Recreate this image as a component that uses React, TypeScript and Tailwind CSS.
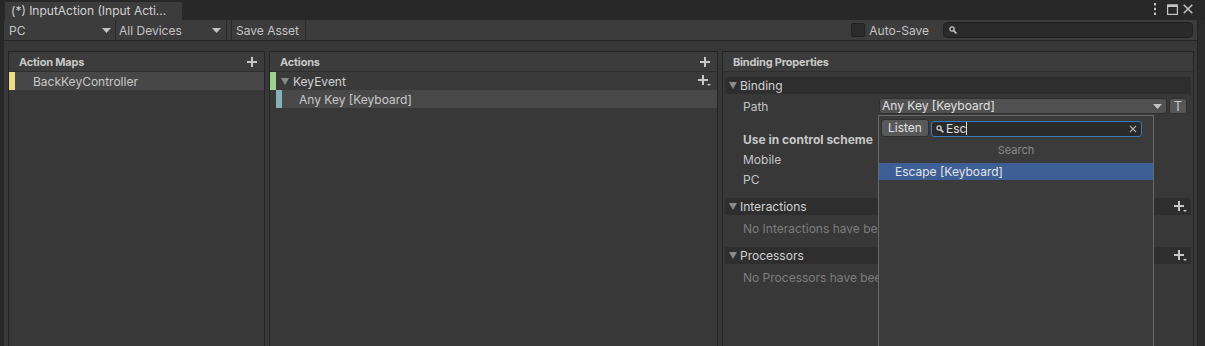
import React from 'react';

const Plus = () => (
  <svg width="10" height="10" viewBox="0 0 10 10">
    <path d="M5 0v10M0 5h10" stroke="#c8c8c8" strokeWidth="2" />
  </svg>
);

const PlusMore = () => (
  <svg width="13" height="12" viewBox="0 0 13 12">
    <path d="M5 0v10M0 5h10" stroke="#c8c8c8" strokeWidth="2" />
    <path d="M9 9h4l-2 2z" fill="#c8c8c8" />
  </svg>
);

const Fold = () => (
  <svg width="8" height="7" viewBox="0 0 8 7">
    <path d="M0 0h8L4 7z" fill="#8a8a8a" />
  </svg>
);

const Arrow = () => (
  <svg width="9" height="5" viewBox="0 0 9 5">
    <path d="M0 0h9L4.5 5z" fill="#c4c4c4" />
  </svg>
);

const Magnifier = ({ color = '#c4c4c4' }: { color?: string }) => (
  <svg width="8" height="8" viewBox="0 0 8 8">
    <circle cx="3" cy="3" r="2.1" stroke={color} strokeWidth="1.3" fill="none" />
    <path d="M4.6 4.6L7.4 7.4" stroke={color} strokeWidth="1.6" />
  </svg>
);

const Row = ({
  children,
  className = '',
}: {
  children: React.ReactNode;
  className?: string;
}) => <div className={`flex items-center ${className}`}>{children}</div>;

const PanelHeader = ({ title, plus = true }: { title: string; plus?: boolean }) => (
  <div className="h-[20px] shrink-0 flex items-center justify-between pl-[10px] pr-[7px] bg-[#3c3c3c] border-b border-[#2e2e2e]">
    <span className="mt-[2px] text-[11px] font-bold text-[#c8c8c8] tracking-[-0.2px]">{title}</span>
    {plus && <Plus />}
  </div>
);

const Foldout = ({ title, plus = false }: { title: string; plus?: boolean }) => (
  <div className="h-[17px] mx-[2px] flex items-center justify-between pl-[4px] pr-[4px] bg-[#2e2e2e]">
    <div className="flex items-center gap-[3px]">
      <Fold />
      <span className="text-[12px] text-[#d2d2d2]">{title}</span>
    </div>
    {plus && <PlusMore />}
  </div>
);

export default function App() {
  return (
    <div className="w-[1205px] h-[346px] bg-[#282828] flex flex-col overflow-hidden font-['Inter','Noto_Sans',sans-serif] select-none">
      {/* tab bar */}
      <div className="h-[20px] shrink-0 flex items-end justify-between pl-[5px] pr-[12px]">
        <div className="w-[177px] h-[18px] bg-[#3c3c3c] rounded-tr-[2px] flex items-center pl-[6px]">
          <span className="text-[12px] text-[#d2d2d2]">(*) InputAction (Input Acti...</span>
        </div>
        <div className="h-[20px] flex items-center pb-[2px]">
          <svg width="4" height="12" viewBox="0 0 4 12">
            <rect x="1" y="0" width="2" height="2.4" fill="#c4c4c4" />
            <rect x="1" y="4.8" width="2" height="2.4" fill="#c4c4c4" />
            <rect x="1" y="9.6" width="2" height="2.4" fill="#c4c4c4" />
          </svg>
          <svg width="11" height="11" viewBox="0 0 11 11" className="ml-[10px]">
            <rect x="0.6" y="1" width="9.8" height="9.4" stroke="#c4c4c4" strokeWidth="1.2" fill="none" />
            <rect x="0.6" y="0.6" width="9.8" height="2.4" fill="#c4c4c4" />
          </svg>
          <svg width="10" height="10" viewBox="0 0 10 10" className="ml-[5px]">
            <path d="M0.7 0.7l8.6 8.6M9.3 0.7l-8.6 8.6" stroke="#c4c4c4" strokeWidth="1.5" />
          </svg>
        </div>
      </div>

      <div className="flex-1 flex">
        <div className="w-[4px] shrink-0" />
        {/* window */}
        <div className="w-[1194px] shrink-0 flex flex-col bg-[#383838] border-r border-[#232323]">
          {/* toolbar */}
          <div className="h-[21px] shrink-0 flex items-center pl-[1px] pr-[4px] bg-[#3c3c3c] border-b border-[#242424] text-[12px] text-[#c4c4c4]">
            <div className="w-[111px] h-full flex items-center justify-between pl-[4px] pr-[4px] border-r border-[#2a2a2a]">
              <span className="mt-[1px]">PC</span>
              <Arrow />
            </div>
            <div className="w-[111px] h-full flex items-center justify-between pl-[3px] pr-[5px] border-r border-[#2a2a2a]">
              <span className="mt-[1px]">All Devices</span>
              <Arrow />
            </div>
            <div className="ml-[4px] w-[75px] h-full flex items-center pl-[4px] border-x border-[#2a2a2a]">
              <span className="mt-[1px]">Save Asset</span>
            </div>
            <div className="flex-1" />
            <div className="w-[14px] h-[14px] rounded-[2px] bg-[#2b2b2b] border border-[#202020]" />
            <span className="ml-[4px] mt-[2px]">Auto-Save</span>
            <div className="ml-[14px] w-[250px] h-[16px] rounded-[4px] bg-[#2a2a2a] border border-[#202020] flex items-center pl-[5px]">
              <Magnifier />
            </div>
          </div>

          {/* body */}
          <div className="flex-1 flex gap-[4px] pt-[10px] pl-[4px]">
            {/* Action Maps */}
            <div className="w-[257px] shrink-0 flex flex-col border border-b-0 border-[#242424]">
              <PanelHeader title="Action Maps" />
              <Row className="h-[18px] bg-[#474747]">
                <div className="w-[6px] h-full bg-[#efdb85]" />
                <span className="ml-[18px] mt-[1px] text-[12px] text-[#c8c8c8]">BackKeyController</span>
              </Row>
            </div>

            {/* Actions */}
            <div className="w-[449px] shrink-0 flex flex-col border border-b-0 border-[#242424]">
              <PanelHeader title="Actions" />
              <Row className="h-[18px] bg-[#3a3a3a] pr-[6px]">
                <div className="w-[6px] h-full bg-[#9fd08f]" />
                <div className="ml-[5px]">
                  <Fold />
                </div>
                <span className="ml-[4px] mt-[1px] text-[12px] text-[#d2d2d2] flex-1">KeyEvent</span>
                <PlusMore />
              </Row>
              <Row className="h-[18px]">
                <div className="w-[6px] h-full" />
                <div className="flex-1 h-full flex items-center bg-[#484848]">
                  <div className="w-[6px] h-full bg-[#86b1b7]" />
                  <span className="ml-[17px] mt-[1px] text-[12px] text-[#c8c8c8]">Any Key [Keyboard]</span>
                </div>
              </Row>
            </div>

            {/* Binding Properties */}
            <div className="relative w-[472px] shrink-0 flex flex-col border border-b-0 border-[#242424]">
              <PanelHeader title="Binding Properties" plus={false} />
              <div className="flex flex-col pt-[5px]">
                <Foldout title="Binding" />
                <Row className="mt-[4px] h-[16px] pl-[20px] pr-[5px]">
                  <span className="w-[136px] mt-[1px] text-[12px] text-[#c4c4c4]">Path</span>
                  <div className="w-[288px] h-[16px] rounded-[3px] bg-[#515151] border border-[#2f2f2f] flex items-center justify-between pl-[2px] pr-[4px]">
                    <span className="text-[12px] text-[#e0e0e0]">Any Key [Keyboard]</span>
                    <Arrow />
                  </div>
                  <div className="ml-[2px] w-[18px] h-[16px] rounded-[3px] bg-[#565656] border border-[#2f2f2f] flex items-center justify-center">
                    <span className="text-[13px] text-[#c8c8c8] leading-none">T</span>
                  </div>
                </Row>
                <Row className="mt-[15px] h-[20px] pl-[20px]">
                  <span className="mt-[1px] text-[12px] font-bold text-[#c8c8c8]">Use in control scheme</span>
                </Row>
                <Row className="h-[20px] pl-[20px]">
                  <span className="mt-[1px] text-[12px] text-[#c4c4c4]">Mobile</span>
                </Row>
                <Row className="h-[20px] pl-[20px]">
                  <span className="mt-[1px] text-[12px] text-[#c4c4c4]">PC</span>
                </Row>
                <div className="mt-[9px]">
                  <Foldout title="Interactions" plus />
                </div>
                <Row className="mt-[3px] h-[20px] pl-[20px]">
                  <span className="mt-[1px] text-[12px] text-[#7c7c7c]">No Interactions have been added.</span>
                </Row>
                <div className="mt-[9px]">
                  <Foldout title="Processors" plus />
                </div>
                <Row className="mt-[3px] h-[20px] pl-[20px]">
                  <span className="mt-[1px] text-[12px] text-[#7c7c7c]">No Processors have been added.</span>
                </Row>
              </div>

              {/* path picker popup */}
              <div className="absolute left-[155px] top-[63px] w-[276px] h-[240px] bg-[#3b3b3b] border border-[#6a6a6a] flex flex-col">
                <div className="flex items-center pt-[3px] pl-[2px]">
                  <div className="w-[48px] h-[18px] rounded-[3px] bg-[#585858] border border-[#2f2f2f] flex items-center justify-center">
                    <span className="text-[12px] text-[#e0e0e0]">Listen</span>
                  </div>
                  <div className="ml-[2px] mt-[1px] w-[211px] h-[16px] rounded-[3px] bg-[#2a2a2a] border border-[#3a79bb] flex items-center pl-[4px] pr-[4px]">
                    <Magnifier color="#d0d0d0" />
                    <span className="ml-[2px] text-[12px] text-[#e0e0e0]">Esc</span>
                    <div className="w-[1px] h-[13px] bg-[#e0e0e0]" />
                    <div className="flex-1" />
                    <svg width="8" height="8" viewBox="0 0 8 8">
                      <path d="M1 1l6 6M7 1L1 7" stroke="#b0b0b0" strokeWidth="1.1" />
                    </svg>
                  </div>
                </div>
                <div className="h-[26px] flex items-center justify-center">
                  <span className="text-[11px] text-[#8a8a8a]">Search</span>
                </div>
                <div className="h-[17px] bg-[#3e5f96] flex items-center pl-[16px]">
                  <span className="mt-[1px] text-[12px] text-[#e4e4e4]">Escape [Keyboard]</span>
                </div>
              </div>
            </div>
          </div>
        </div>
        <div className="flex-1 bg-[#2b2b2b]" />
      </div>
    </div>
  );
}
